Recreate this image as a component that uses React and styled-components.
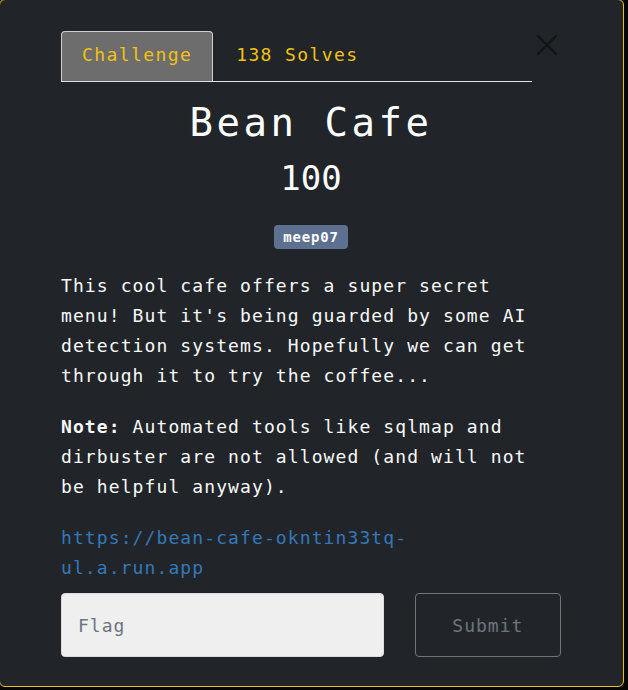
import React from 'react';
import styled, { createGlobalStyle } from 'styled-components';

const GlobalStyle = createGlobalStyle`
  html, body {
    margin: 0;
    padding: 0;
    background: #060606;
  }
  body {
    font-family: "DejaVu Sans Mono", "Liberation Mono", monospace;
    -webkit-font-smoothing: antialiased;
  }
`;

const Modal = styled.div`
  box-sizing: border-box;
  width: 625px;
  height: 688px;
  margin: -1px 0 0 -1px;
  padding: 31px 62px 30px 61px;
  background: #212529;
  border: 1px solid #efc11d;
  border-radius: 6px;
  display: flex;
  flex-direction: column;
`;

const Header = styled.div`
  display: flex;
  align-items: flex-start;
`;

const Tabs = styled.nav`
  flex: 1;
  display: flex;
  border-bottom: 1px solid #dee2e6;
  margin-right: 1px;
`;

const Tab = styled.div`
  box-sizing: border-box;
  height: 50px;
  display: flex;
  align-items: center;
  padding: 0 20px 4px;
  margin-right: 2px;
  font-size: 18px;
  letter-spacing: 1.4px;
  color: #f4c20d;
  border: 1px solid ${(p) => (p.$active ? '#cfcfcf' : 'transparent')};
  border-bottom: none;
  border-radius: 4px 4px 0 0;
  background: ${(p) => (p.$active ? '#6d6d6d' : 'transparent')};
`;

const CloseButton = styled.button`
  width: 28px;
  height: 30px;
  margin-top: -1px;
  padding: 0;
  border: none;
  background: none;
  display: flex;
  align-items: center;
  justify-content: center;
`;

const Title = styled.h3`
  margin: 17px 0 0;
  text-align: center;
  font-size: 39px;
  line-height: 47px;
  font-weight: 400;
  letter-spacing: 3.5px;
  color: #ffffff;
`;

const Value = styled.h4`
  margin: 10px 0 0;
  text-align: center;
  font-size: 34px;
  line-height: 44px;
  font-weight: 400;
  color: #ffffff;
`;

const Tags = styled.div`
  display: flex;
  justify-content: center;
  margin-top: 25px;
`;

const Badge = styled.span`
  box-sizing: border-box;
  height: 24px;
  padding: 0 9px;
  display: flex;
  align-items: center;
  border-radius: 4px;
  background: #5d7090;
  color: #ffffff;
  font-size: 14px;
  font-weight: 700;
  letter-spacing: 0.8px;
`;

const Description = styled.div`
  max-width: 472px;
  margin-top: 22px;
  color: #f8f9fa;
  font-size: 18px;
  line-height: 30px;
  letter-spacing: 1.1px;

  & p {
    margin: 0 0 21px;
  }
  & p:last-child {
    margin-bottom: 10px;
  }
  & strong {
    font-weight: 700;
  }
  & a {
    color: #3379b9;
    text-decoration: none;
  }
`;

const SubmitRow = styled.form`
  display: flex;
  gap: 31px;
`;

const FlagInput = styled.input`
  box-sizing: border-box;
  width: 324px;
  height: 64px;
  padding: 0 16px;
  border: 1px solid #dcdcdc;
  border-radius: 4px;
  background: #efefef;
  font-family: "DejaVu Sans Mono", "Liberation Mono", monospace;
  font-size: 18px;
  letter-spacing: 1px;
  color: #495057;
  outline: none;

  &::placeholder {
    color: #6c757d;
  }
`;

const SubmitButton = styled.button`
  box-sizing: border-box;
  width: 147px;
  height: 64px;
  border: 1px solid #6c757d;
  border-radius: 4px;
  background: transparent;
  color: #6c757d;
  font-family: "DejaVu Sans Mono", "Liberation Mono", monospace;
  font-size: 18px;
  letter-spacing: 1px;
`;

export default function App() {
  return (
    <>
      <GlobalStyle />
      <Modal>
        <Header>
          <Tabs>
            <Tab $active>Challenge</Tab>
            <Tab>138 Solves</Tab>
          </Tabs>
          <CloseButton aria-label="Close">
            <svg width="22" height="22" viewBox="0 0 22 22">
              <path
                d="M2 2 L20 20 M20 2 L2 20"
                stroke="#131416"
                strokeWidth="2.4"
                strokeLinecap="round"
              />
            </svg>
          </CloseButton>
        </Header>

        <Title>Bean Cafe</Title>
        <Value>100</Value>
        <Tags>
          <Badge>meep07</Badge>
        </Tags>

        <Description>
          <p>
            This cool cafe offers a super secret menu! But it's being guarded
            by some AI detection systems. Hopefully we can get through it to
            try the coffee...
          </p>
          <p>
            <strong>Note:</strong> Automated tools like sqlmap and dirbuster
            are not allowed (and will not be helpful anyway).
          </p>
          <p>
            <a href="#">https://bean-cafe-okntin33tq-ul.a.run.app</a>
          </p>
        </Description>

        <SubmitRow onSubmit={(e) => e.preventDefault()}>
          <FlagInput placeholder="Flag" />
          <SubmitButton type="submit">Submit</SubmitButton>
        </SubmitRow>
      </Modal>
    </>
  );
}
